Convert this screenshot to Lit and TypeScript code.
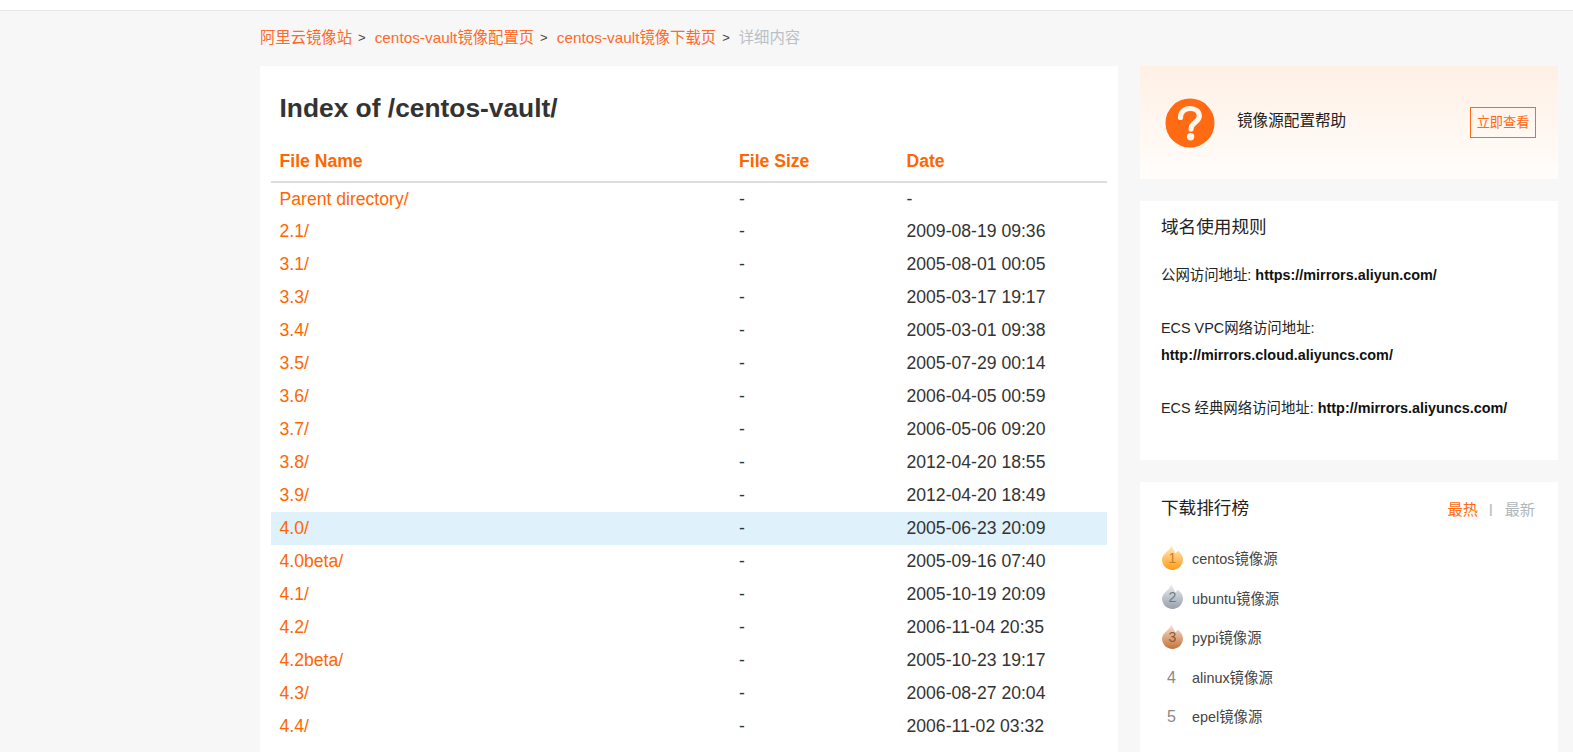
import { LitElement, html, css, svg } from "lit";
import { customElement } from "lit/decorators.js";

const ROWS: [string, string][] = [
  ["Parent directory/", "-"],
  ["2.1/", "2009-08-19 09:36"],
  ["3.1/", "2005-08-01 00:05"],
  ["3.3/", "2005-03-17 19:17"],
  ["3.4/", "2005-03-01 09:38"],
  ["3.5/", "2005-07-29 00:14"],
  ["3.6/", "2006-04-05 00:59"],
  ["3.7/", "2006-05-06 09:20"],
  ["3.8/", "2012-04-20 18:55"],
  ["3.9/", "2012-04-20 18:49"],
  ["4.0/", "2005-06-23 20:09"],
  ["4.0beta/", "2005-09-16 07:40"],
  ["4.1/", "2005-10-19 20:09"],
  ["4.2/", "2006-11-04 20:35"],
  ["4.2beta/", "2005-10-23 19:17"],
  ["4.3/", "2006-08-27 20:04"],
  ["4.4/", "2006-11-02 03:32"],
];

const RANK = ["centos镜像源", "ubuntu镜像源", "pypi镜像源", "alinux镜像源", "epel镜像源"];
const FLAME = [
  { top: "#ffeccc", bottom: "#ff9c14", num: "#c9801f" },
  { top: "#eceef1", bottom: "#98a0ab", num: "#727985" },
  { top: "#f8e6d8", bottom: "#c4713a", num: "#94552c" },
];

function flame(i: number) {
  const c = FLAME[i];
  return svg`<svg class="flame" width="21" height="25" viewBox="0 0 21 25">
    <defs><linearGradient id="fl${i}" x1="0" y1="0" x2="0" y2="1">
      <stop offset="0" stop-color="${c.top}"/><stop offset="1" stop-color="${c.bottom}"/>
    </linearGradient></defs>
    <path fill="url(#fl${i})" d="M9.5 0C10.3 3 12 5.5 13.2 8C14.4 7.6 15.2 6.6 15.6 5.4C18.6 8 21 10.6 21 14.6C21 20.4 16.3 25 10.5 25C4.7 25 0 20.4 0 14.6C0 9 7.4 6.4 9.5 0Z"/>
  </svg>`;
}

@customElement("app-root")
export class AppRoot extends LitElement {
  static styles = css`
    :host {
      display: block;
      height: 752px;
      overflow: hidden;
      background: #f7f7f7;
      font-family: "Liberation Sans", "Noto Sans CJK SC", sans-serif;
      color: #333;
    }
    a { color: inherit; text-decoration: none; }
    .top { height: 10px; background: #fff; border-bottom: 1px solid #e6e6e6; }
    .wrap { margin-left: 260px; width: 1298px; }
    .crumbs {
      height: 55px;
      padding-bottom: 6px;
      box-sizing: border-box;
      display: flex;
      align-items: center;
      font-size: 15.35px;
      color: #ff6a2b;
      white-space: nowrap;
    }
    .sep { color: #444; font-size: 13px; margin: 0 9px 0 6px; padding-top: 3px; }
    .cur { color: #b9c0c7; }
    .cols { display: flex; gap: 22px; align-items: stretch; }
    .main {
      flex: none;
      width: 858px;
      height: 700px;
      background: #fff;
      padding: 0 11px;
      box-sizing: border-box;
    }
    h1 {
      margin: 0;
      padding: 25px 8.5px 0;
      height: 68px;
      box-sizing: border-box;
      font-size: 26.35px;
      line-height: 34px;
      font-weight: 700;
      color: #333;
    }
    table { width: 100%; border-collapse: collapse; table-layout: fixed; font-size: 17.6px; }
    th {
      height: 48px;
      padding: 8px 9px 0;
      text-align: left;
      font-weight: 700;
      color: #ff6600;
      border-bottom: 2px solid #ddd;
      box-sizing: border-box;
    }
    th.a { width: 459px; padding-left: 8.5px; }
    th.b { width: 167px; }
    th:last-child, td:last-child { padding-left: 9.5px; }
    td { height: 33px; padding: 0 9px; color: #333; box-sizing: border-box; }
    td:first-child { padding-left: 8.5px; }
    td a { color: #ff6600; }
    tr.hl td { background: #dff1fb; }
    .side { flex: none; width: 418px; display: flex; flex-direction: column; gap: 22px; }
    .help {
      height: 113px;
      background: linear-gradient(#fff0e5, #fffdfb);
      display: flex;
      align-items: center;
      padding: 0 22px 0 25px;
      box-sizing: border-box;
    }
    .qicon { flex: none; width: 50px; height: 50px; margin: 1px 22px 0 0; }
    .help-t { flex: 1; font-size: 15.6px; color: #222; margin-top: -8px; }
    .btn {
      flex: none;
      width: 66px;
      height: 31px;
      border: 1px solid #ff6a13;
      box-sizing: border-box;
      color: #ff6a13;
      font-size: 13.2px;
      padding-bottom: 3px;
      display: flex;
      align-items: center;
      justify-content: center;
      white-space: nowrap;
    }
    .card { background: #fff; padding: 0 22px 0 21px; }
    .rules { height: 259px; box-sizing: border-box; }
    h2 {
      margin: 0;
      font-size: 17.6px;
      font-weight: 400;
      color: #222;
      line-height: 24px;
      padding-top: 14px;
    }
    .addr { font-size: 14.4px; line-height: 26.5px; color: #222; margin-top: 23px; }
    .addr b { color: #111; }
    .addr p { margin: 0 0 26.5px; }
    .rank { height: 300px; box-sizing: border-box; }
    .rank-h { display: flex; justify-content: space-between; align-items: center; height: 52px; box-sizing: border-box; }
    .rank-h h2 { padding: 0; }
    .tabs { display: flex; align-items: center; font-size: 15.2px; color: #b0b6bc; padding-right: 1px; }
    .tabs .on { color: #ff6a13; }
    .tabs i { font-style: normal; font-weight: 700; margin: 0 12px 0 11px; font-size: 13px; color: #bcc2c8; }
    ul { list-style: none; margin: 0; padding: 4px 0 0; }
    li { height: 39.5px; display: flex; align-items: center; font-size: 14.4px; color: #444; }
    .no { flex: none; width: 31px; display: flex; align-items: center; padding-left: 1px; box-sizing: border-box; position: relative; }
    .flame { display: block; margin-top: -1px; }
    .fno {
      position: absolute;
      left: 1px;
      width: 21px;
      top: 3px;
      text-align: center;
      font-size: 14px;
      line-height: 18px;
    }
    .plain { width: 21px; text-align: center; font-size: 16px; color: #888; margin: 3px 0 0 -1px; }
  `;

  render() {
    return html`
      <div class="top"></div>
      <div class="wrap">
        <nav class="crumbs">
          <a href="#">阿里云镜像站</a><span class="sep">&gt;</span>
          <a href="#">centos-vault镜像配置页</a><span class="sep">&gt;</span>
          <a href="#">centos-vault镜像下载页</a><span class="sep">&gt;</span>
          <span class="cur">详细内容</span>
        </nav>
        <div class="cols">
          <main class="main">
            <h1>Index of /centos-vault/</h1>
            <table>
              <thead><tr><th class="a">File Name</th><th class="b">File Size</th><th>Date</th></tr></thead>
              <tbody>
                ${ROWS.map(([n, d]) => html`<tr class=${n === "4.0/" ? "hl" : ""}><td><a href="#">${n}</a></td><td>-</td><td>${d}</td></tr>`)}
              </tbody>
            </table>
          </main>
          <aside class="side">
            <section class="help">
              <svg class="qicon" viewBox="0 0 50 50">
                <circle cx="25" cy="25" r="24.5" fill="#ff6a13"/>
                <path d="M15.5 19.5C15.5 13.8 19.6 10.5 25 10.5C30.4 10.5 34.3 13.6 34.3 18.2C34.3 24 26 24.6 26 31" fill="none" stroke="#fff5ec" stroke-width="5.2" stroke-linecap="round"/>
                <circle cx="25.6" cy="38.7" r="3.7" fill="#fff5ec"/>
              </svg>
              <div class="help-t">镜像源配置帮助</div>
              <a class="btn" href="#">立即查看</a>
            </section>
            <section class="card rules">
              <h2>域名使用规则</h2>
              <div class="addr">
                <p>公网访问地址: <b>https://mirrors.aliyun.com/</b></p>
                <p>ECS VPC网络访问地址:<br /><b>http://mirrors.cloud.aliyuncs.com/</b></p>
                <p>ECS 经典网络访问地址: <b>http://mirrors.aliyuncs.com/</b></p>
              </div>
            </section>
            <section class="card rank">
              <div class="rank-h">
                <h2>下载排行榜</h2>
                <div class="tabs"><span class="on">最热</span><i>|</i><span>最新</span></div>
              </div>
              <ul>
                ${RANK.map((t, i) => html`<li>
                  <span class="no">
                    ${i < 3
                      ? html`${flame(i)}<span class="fno" style="color:${FLAME[i].num}">${i + 1}</span>`
                      : html`<span class="plain">${i + 1}</span>`}
                  </span>${t}
                </li>`)}
              </ul>
            </section>
          </aside>
        </div>
      </div>
    `;
  }
}
